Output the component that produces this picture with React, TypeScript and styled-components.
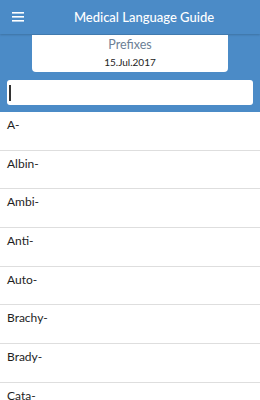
import styled, { createGlobalStyle } from "styled-components";

const GlobalStyle = createGlobalStyle`
	body {
		margin: 0;
		font-family: Lato, "Open Sans", sans-serif;
		background: #ffffff;
	}
`;

const Screen = styled.div`
	width: 260px;
	height: 400px;
	overflow: hidden;
	display: flex;
	flex-direction: column;
`;

const Top = styled.div`
	background: #4b8bc7;
	padding-bottom: 7px;
`;

const Toolbar = styled.div`
	height: 34px;
	display: flex;
	align-items: center;
	box-shadow: 0 1px 2px rgba(0, 0, 0, 0.18);
`;

const MenuButton = styled.div`
	width: 36px;
	display: flex;
	justify-content: center;
`;

const Title = styled.h1`
	flex: 1;
	margin: 0 0 0 -36px;
	padding-left: 28px;
	text-align: center;
	color: #ffffff;
	font-size: 13px;
	font-weight: 500;
`;

const Card = styled.div`
	margin: 1px 32px 0;
	height: 36px;
	background: #ffffff;
	border-radius: 0 0 4px 4px;
	display: flex;
	flex-direction: column;
	align-items: center;
	padding-top: 1px;
`;

const CardTitle = styled.div`
	color: #6c7f96;
	font-size: 12.5px;
	line-height: 18px;
`;

const CardDate = styled.div`
	color: #222222;
	font-size: 10px;
	line-height: 14px;
	margin-top: 1px;
`;

const Search = styled.div`
	margin: 8px 7px 0;
	height: 25px;
	background: #ffffff;
	border-radius: 3px;
	display: flex;
	align-items: center;
	padding-left: 2px;
`;

const Cursor = styled.div`
	width: 1.5px;
	height: 16px;
	background: #333333;
`;

const List = styled.div`
	display: flex;
	flex-direction: column;
`;

const Row = styled.div`
	height: 38.7px;
	flex-shrink: 0;
	border-bottom: 1px solid #dedede;
	padding: 5px 7px 0;
	box-sizing: border-box;
	font-size: 12px;
	color: #1e1e1e;
`;

const items = ["A-", "Albin-", "Ambi-", "Anti-", "Auto-", "Brachy-", "Brady-", "Cata-"];

function App() {
	return (
		<Screen>
			<GlobalStyle />
			<Top>
				<Toolbar>
					<MenuButton>
						<svg width="13" height="10" viewBox="0 0 13 10">
							<rect x="0" y="0" width="12" height="1.6" fill="#fff" />
							<rect x="0" y="4" width="12" height="1.6" fill="#fff" />
							<rect x="0" y="8" width="12" height="1.6" fill="#fff" />
						</svg>
					</MenuButton>
					<Title>Medical Language Guide</Title>
				</Toolbar>
				<Card>
					<CardTitle>Prefixes</CardTitle>
					<CardDate>15.Jul.2017</CardDate>
				</Card>
				<Search>
					<Cursor />
				</Search>
			</Top>
			<List>
				{items.map((item) => (
					<Row key={item}>{item}</Row>
				))}
			</List>
		</Screen>
	);
}

export default App;
